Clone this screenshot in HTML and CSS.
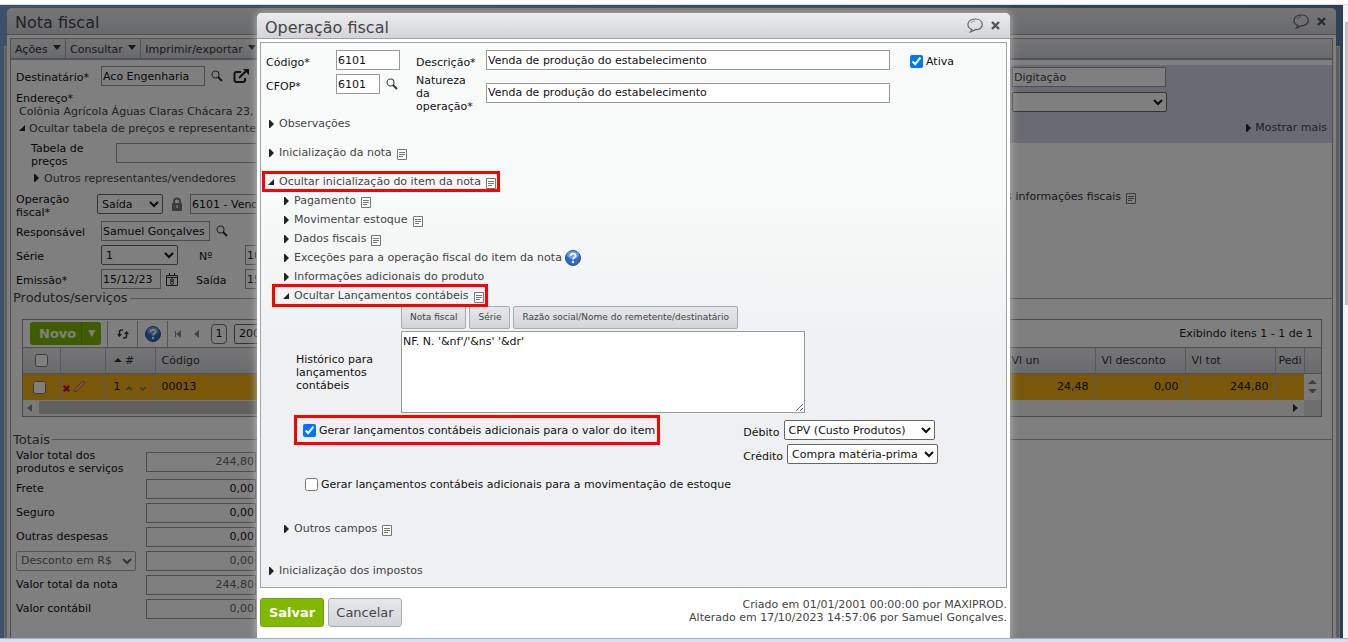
FILE: index.html
```html
<!DOCTYPE html>
<html lang="pt-BR">
<head>
	<meta charset="utf-8">
	<title>Nota fiscal</title>
	<link rel="stylesheet" href="styles.css">
</head>
<body>
<svg class="defs" width="0" height="0">
	<symbol id="i-right" viewBox="0 0 6 10"><path d="M1 1h1l4 4-4 4H1z" fill="#222"/></symbol>
	<symbol id="i-open" viewBox="0 0 6 10"><path d="M6 2v6H0z" fill="#222"/></symbol>
	<symbol id="i-note" viewBox="0 0 10 11"><path d="M.5.5h9v10h-9z" fill="#fff" stroke="#777"/><path d="M2 3.500h6M2 5.500h6M2 7.500h4" stroke="#777"/></symbol>
	<symbol id="i-search" viewBox="0 0 12 12"><circle cx="4.500" cy="4.500" r="3.500" fill="none" stroke="#444" stroke-width="1.100"/><path d="M7 7l4 4" stroke="#333" stroke-width="1.900"/></symbol>
	<symbol id="i-chat" viewBox="0 0 17 15"><path d="M5 11.500C-1.500 9 0 1 8.500 1s9.500 10.500 0 10.700L3.500 14z" fill="none" stroke="#666" stroke-width="1.200"/><path d="M4 5c1-1.500 2-2 4-2" fill="none" stroke="#888"/></symbol>
	<symbol id="i-close" viewBox="0 0 9 9"><path d="M1 1l7 7M8 1L1 8" stroke="#555" stroke-width="2.400"/></symbol>
	<symbol id="i-ext" viewBox="0 0 16 14"><path d="M8 3H3.500Q1.500 3 1.500 5v6q0 2 2 2H10q2 0 2-2V9" fill="none" stroke="#222" stroke-width="2"/><path d="M6 9l7-7" stroke="#222" stroke-width="2"/><path d="M10 0h6v6z" fill="#222"/></symbol>
	<symbol id="i-lock" viewBox="0 0 12 14"><path d="M3 7V4.500a3 3 0 0 1 6 0V7" fill="none" stroke="#777" stroke-width="2"/><rect x="1" y="6" width="10" height="8" rx="1" fill="#777"/><path d="M6 8v3" stroke="#ccc" stroke-width="2"/></symbol>
	<symbol id="i-cal" viewBox="0 0 12 13"><path d="M.5 2.500h11v10H.5zM1 4.500h10M3.500 0v3M8.500 0v3" fill="none" stroke="#333"/><ellipse cx="6" cy="7" rx="1.500" ry="1.200" fill="none" stroke="#333"/><ellipse cx="6" cy="9.800" rx="1.700" ry="1.400" fill="none" stroke="#333"/></symbol>
	<symbol id="i-help" viewBox="0 0 16 16"><circle cx="8" cy="8" r="7.500" fill="#2f69c4" stroke="#2351a0"/><ellipse cx="8" cy="5" rx="6" ry="4" fill="#6d9be2"/><path d="M5.500 6.200C5.500 2.500 11 3 10.600 6 10.400 7.500 8 7.800 8 9.500" fill="none" stroke="#fff" stroke-width="1.800"/><circle cx="8" cy="12" r="1.200" fill="#fff"/></symbol>
	<symbol id="i-sync" viewBox="0 0 14 12"><path d="M7 2H5.500Q3.500 2 3.500 4v4M7 10h1.500q2 0 2-2V4" fill="none" stroke="#333" stroke-width="1.500"/><path d="M1 6h5L3.500 9zM8 6h5L10.500 3z" fill="#333"/></symbol>
	<symbol id="i-pencil" viewBox="0 0 13 13"><path d="M1 12l1-3.500L10 1l2 2-8 8z" fill="#f3b37a" stroke="#b56a35"/></symbol>
</svg>

<div class="edge-top"></div>
<div class="view">
<div class="screen">
	<div class="back-window"></div>

	<section class="window nota">
		<header class="title-bar">
			<h1>Nota fiscal</h1>
			<button class="ico" aria-label="Comentar"><svg width="17" height="15"><use href="#i-chat"/></svg></button>
			<button class="ico" aria-label="Fechar"><svg width="9" height="9"><use href="#i-close"/></svg></button>
		</header>
		<div class="nota-body">
			<nav class="menu">
				<button>Ações <i class="down"></i></button>
				<button>Consultar <i class="down"></i></button>
				<button>Imprimir/exportar <i class="down"></i></button>
			</nav>
			<div class="top">
				<div class="left">
					<div class="row r-dest">
						<label for="dest">Destinatário*</label>
						<input id="dest" class="w104" value="Aco Engenharia">
						<svg class="gap6" width="12" height="12"><use href="#i-search"/></svg>
						<svg class="gap10" width="16" height="14"><use href="#i-ext"/></svg>
					</div>
					<div class="addr"><span>Endereço*</span><p>Colônia Agrícola Águas Claras Chácara 23, Lote</p></div>
					<a class="fold" href="#"><svg width="6" height="10"><use href="#i-open"/></svg>Ocultar tabela de preços e representante/vendedor</a>
					<div class="row r-tab">
						<label for="tab">Tabela de preços</label>
						<input id="tab" class="w154">
					</div>
					<a class="fold inner" href="#"><svg width="6" height="10"><use href="#i-right"/></svg>Outros representantes/vendedores</a>
					<div class="row r-op">
						<label for="op">Operação fiscal*</label>
						<select id="op" class="w66"><option>Saída</option></select>
						<svg class="gap8" width="12" height="14"><use href="#i-lock"/></svg>
						<input class="w77 gap7" aria-label="Operação" value="6101 - Venda">
					</div>
					<div class="row">
						<label for="resp">Responsável</label>
						<input id="resp" class="w109" value="Samuel Gonçalves">
						<svg class="gap6" width="12" height="12"><use href="#i-search"/></svg>
					</div>
					<div class="row">
						<label for="serie">Série</label>
						<select id="serie" class="w77"><option>1</option></select>
						<label class="second" for="num">Nº</label>
						<input id="num" class="w60" value="10256">
					</div>
					<div class="row">
						<label for="emi">Emissão*</label>
						<input id="emi" class="w60" value="15/12/23">
						<svg class="gap5" width="12" height="13"><use href="#i-cal"/></svg>
						<label class="second near" for="sai">Saída</label>
						<input id="sai" class="w60" value="15/12/23">
					</div>
				</div>
				<div class="right">
					<div class="status">
						<input class="w154" aria-label="Situação" value="Digitação">
						<select class="w155" aria-label="Etapa"><option></option></select>
						<a class="more" href="#"><svg width="6" height="10"><use href="#i-right"/></svg>Mostrar mais</a>
					</div>
					<p class="extra">Mais informações fiscais <svg width="10" height="11"><use href="#i-note"/></svg></p>
				</div>
			</div>

			<h2>Produtos/serviços</h2>
			<div class="grid">
				<div class="tools">
					<button class="novo">Novo<span>▼</span></button>
					<button class="tool" aria-label="Atualizar"><svg width="14" height="12"><use href="#i-sync"/></svg></button>
					<button class="tool" aria-label="Ajuda"><svg width="16" height="16"><use href="#i-help"/></svg></button>
					<i class="sep"></i><i class="first"></i><i class="prev"></i>
					<span class="page">1</span>
					<select class="w60" aria-label="Itens por página"><option>200</option></select>
					<span class="count">Exibindo itens 1 - 1 de 1</span>
				</div>
				<table>
					<colgroup><col class="c-chk"><col class="c-act"><col class="c-num"><col class="c-cod"><col><col class="c-val"><col class="c-val"><col class="c-val"><col class="c-ped"><col class="c-bar"></colgroup>
					<tr>
						<th><input type="checkbox" aria-label="Selecionar todos"></th><th></th><th><i class="up"></i> #</th><th>Código</th><th></th><th>Vl un</th><th>Vl desconto</th><th>Vl tot</th><th>Pedi</th><th></th>
					</tr>
					<tr>
						<td><input type="checkbox" aria-label="Selecionar item 1"></td>
						<td><svg class="del" width="7" height="7" viewBox="0 0 9 9"><path d="M1 1l7 7M8 1L1 8" stroke="#c01818" stroke-width="3"/></svg> <svg width="13" height="13"><use href="#i-pencil"/></svg></td>
						<td>1 <svg width="24" height="8"><path d="M2 6l3-3 3 3M16 3l3 3 3-3" fill="none" stroke="#776" stroke-width="1.500"/></svg></td>
						<td>00013</td><td></td><td class="num">24,48</td><td class="num">0,00</td><td class="num">244,80</td><td></td>
						<td class="bar"><i class="up"></i><i class="down small"></i></td>
					</tr>
				</table>
				<div class="scroll"><i class="prev"></i><span></span><i class="next"></i><b></b></div>
			</div>

			<h2 class="totais">Totais</h2>
			<div class="sum">
				<label for="t1">Valor total dos produtos e serviços</label><input id="t1" value="244,80" disabled>
				<label for="t2">Frete</label><input id="t2" value="0,00">
				<label for="t3">Seguro</label><input id="t3" value="0,00">
				<label for="t4">Outras despesas</label><input id="t4" value="0,00">
				<select aria-label="Tipo de desconto" disabled><option>Desconto em R$</option></select><input aria-label="Desconto" value="0,00" disabled>
				<label for="t6">Valor total da nota</label><input id="t6" value="244,80" disabled>
				<label for="t7">Valor contábil</label><input id="t7" value="0,00" disabled>
			</div>
		</div>
	</section>

	<div class="shade"></div>

	<section class="window dialog" role="dialog" aria-label="Operação fiscal">
		<header class="title-bar">
			<h1>Operação fiscal</h1>
			<button class="ico" aria-label="Comentar"><svg width="17" height="15"><use href="#i-chat"/></svg></button>
			<button class="ico" aria-label="Fechar"><svg width="9" height="9"><use href="#i-close"/></svg></button>
		</header>
		<div class="dialog-body">
			<div class="form">
				<div class="codes">
					<label for="cod">Código*</label><input id="cod" class="w64" value="6101">
					<label for="cfop">CFOP*</label><div><input id="cfop" class="w44" value="6101"><svg class="gap6" width="12" height="12"><use href="#i-search"/></svg></div>
				</div>
				<div class="names">
					<label for="desc">Descrição*</label><input id="desc" value="Venda de produção do estabelecimento">
					<label for="nat">Natureza da operação*</label><input id="nat" value="Venda de produção do estabelecimento">
				</div>
				<label class="ativa"><input type="checkbox" checked>Ativa</label>
			</div>

			<a class="item" href="#"><svg width="6" height="10"><use href="#i-right"/></svg>Observações</a>
			<a class="item" href="#"><svg width="6" height="10"><use href="#i-right"/></svg>Inicialização da nota<svg class="note" width="10" height="11"><use href="#i-note"/></svg></a>
			<a class="item mark" href="#"><svg width="6" height="10"><use href="#i-open"/></svg>Ocultar inicialização do item da nota<svg class="note" width="10" height="11"><use href="#i-note"/></svg></a>
			<div class="subs">
				<a class="item" href="#"><svg width="6" height="10"><use href="#i-right"/></svg>Pagamento<svg class="note" width="10" height="11"><use href="#i-note"/></svg></a>
				<a class="item" href="#"><svg width="6" height="10"><use href="#i-right"/></svg>Movimentar estoque<svg class="note" width="10" height="11"><use href="#i-note"/></svg></a>
				<a class="item" href="#"><svg width="6" height="10"><use href="#i-right"/></svg>Dados fiscais<svg class="note" width="10" height="11"><use href="#i-note"/></svg></a>
				<a class="item" href="#"><svg width="6" height="10"><use href="#i-right"/></svg>Exceções para a operação fiscal do item da nota<svg class="q" width="16" height="16"><use href="#i-help"/></svg></a>
				<a class="item" href="#"><svg width="6" height="10"><use href="#i-right"/></svg>Informações adicionais do produto</a>
				<a class="item mark" href="#"><svg width="6" height="10"><use href="#i-open"/></svg>Ocultar Lançamentos contábeis<svg class="note" width="10" height="11"><use href="#i-note"/></svg></a>
			</div>

			<div class="hist">
				<label for="hist">Histórico para lançamentos contábeis</label>
				<div>
					<div class="tags"><button>Nota fiscal</button><button>Série</button><button>Razão social/Nome do remetente/destinatário</button></div>
					<textarea id="hist">NF. N. '&amp;nf'/'&amp;ns' '&amp;dr'</textarea>
				</div>
			</div>
			<div class="gerar">
				<label class="chk boxed"><input type="checkbox" checked>Gerar lançamentos contábeis adicionais para o valor do item</label>
				<div class="contas">
					<div><label for="deb">Débito</label><select id="deb"><option>CPV (Custo Produtos)</option></select></div>
					<div><label for="cred">Crédito</label><select id="cred"><option>Compra matéria-prima</option></select></div>
				</div>
			</div>
			<label class="chk estoque"><input type="checkbox">Gerar lançamentos contábeis adicionais para a movimentação de estoque</label>
			<div class="subs outros">
				<a class="item" href="#"><svg width="6" height="10"><use href="#i-right"/></svg>Outros campos<svg class="note" width="10" height="11"><use href="#i-note"/></svg></a>
			</div>
			<a class="item" href="#"><svg width="6" height="10"><use href="#i-right"/></svg>Inicialização dos impostos</a>
		</div>
		<footer>
			<button class="salvar">Salvar</button>
			<button class="cancelar">Cancelar</button>
			<p>Criado em 01/01/2001 00:00:00 por MAXIPROD.<br>Alterado em 17/10/2023 14:57:06 por Samuel Gonçalves.</p>
		</footer>
	</section>
</div>
<div class="page-scroll"><span></span></div>
</div>
<div class="edge-bottom"></div>
</body>
</html>
```

FILE: styles.css
```css
*{box-sizing:border-box;}
body,h1,h2,p{margin:0;}
body{height:100vh;display:flex;flex-direction:column;overflow:hidden;background:#fff;color:#111;font:11px/13px "DejaVu Sans",sans-serif;}
input,select,textarea,button{font:inherit;color:inherit;margin:0;}
input,textarea{height:20px;padding:0 1px;border:1px solid #999;background:#fff;}
input[type=checkbox]{width:13px;height:13px;padding:0;flex:none;}
select{height:20px;padding:0;border:1px solid #666;border-radius:2px;background-color:#fff;}
button{padding:0;border:0;background:none;}
a{color:#444;text-decoration:none;}
svg{flex:none;}
.defs{position:absolute;}

.edge-top{height:5px;flex:none;border-bottom:1px solid #ddd;}
.edge-bottom{height:4px;flex:none;background:#d7deef;border-top:1px solid #a9b0bd;}
.view{flex:1;min-height:0;display:flex;}
.screen{flex:1;min-width:0;position:relative;overflow:hidden;background:linear-gradient(90deg,#7ba2d2,#5d81ab);}
.page-scroll{width:5px;padding:17px 0 0 2px;background:#f4f4f4;}
.page-scroll span{display:block;height:46%;background:#c1c1c1;}
.back-window{position:absolute;top:41px;left:4px;right:3px;bottom:0;background:#bbb;border:1px solid #ddd;}
.shade{position:absolute;top:0;left:0;right:0;bottom:0;background:rgba(0,0,0,.5);}

/* windows */
.window{background:#fff;border-radius:5px 5px 0 0;}
.title-bar{display:flex;align-items:center;gap:7px;height:26px;padding:0 10px 0 8px;border-bottom:1px solid #9ea3ab;border-radius:5px 5px 0 0;background:linear-gradient(#ececee,#d2d4d8);}
.title-bar h1{flex:1;padding-top:4px;font-size:16px;line-height:22px;font-weight:400;color:#444;}
.ico{display:flex;}
.nota{position:relative;margin:3px 7px 0;height:700px;padding:0 3px;}
.nota .title-bar{height:27px;margin:0 -3px 3px;}
.nota-body{height:100%;border:1px solid #9ea3ab;}

.menu{display:flex;height:21px;border-bottom:2px solid #9ea3ab;background:linear-gradient(#ececee,#d2d4d8);}
.menu button{padding:1px 4px 0;border-right:1px solid #9ea3ab;color:#333;white-space:nowrap;}
.down,.up,.prev,.next,.first{display:inline-block;border:4px solid transparent;}
.down{border-top:5px solid #333;border-bottom:0;vertical-align:3px;margin-left:2px;}
.up{border-bottom:4px solid #333;border-top:0;vertical-align:2px;}
.prev,.first{border-right:5px solid #888;border-left:0;}
.first{box-shadow:-2px 0 0 -1px #888;}
.next{border-left:5px solid #333;border-right:0;}

.top{display:flex;justify-content:space-between;height:229px;}
.left{width:245px;padding:6px 0 0 5px;white-space:nowrap;overflow:hidden;}
.row{display:flex;align-items:center;height:20px;margin-bottom:4px;}
.row input,.row select{flex:none;}
.row label{flex:none;width:85px;padding-top:3px;}
.row .second{width:46px;margin-left:21px;}
.row .near{width:49px;margin-left:18px;}
.addr{padding-top:3px;}
.addr p{padding-left:3px;color:#444;}
.fold{display:flex;align-items:center;height:20px;padding-left:3px;gap:4px;}
.inner{padding-left:17px;gap:5px;height:22px;}
.r-tab,.r-op{white-space:normal;}
.r-dest{margin-bottom:3px;}
.r-tab{padding-left:15px;margin-top:5px;}
.r-op{margin:5px 0 7px;}
.r-op label{width:81px;padding-right:25px;}
.gap5{margin-left:5px;}
.gap6{margin-left:6px;}
.gap7{margin-left:7px;}
.gap8{margin-left:8px;}
.gap10{margin-left:10px;}
.w44{width:44px;}
.w60{width:60px;}
.w64{width:64px;}
.w66{width:66px;}
.w77{width:77px;}
.w104{width:104px;}
.w109{width:109px;}
.w154{width:154px;}
.w155{width:155px;}

.right{width:400px;padding-top:5px;}
.status{display:flex;flex-direction:column;align-items:flex-start;gap:5px;height:78px;padding:2px 5px 0 80px;background:#d5d5e4;}
.status input{color:#444;}
.more{display:flex;align-items:center;gap:4px;margin:4px 0 0 auto;}
.extra{padding:47px 0 0 55px;color:#333;}
.extra svg{vertical-align:-4px;margin-left:2px;}

h2{display:flex;align-items:center;gap:2px;height:18px;padding-left:2px;font-size:13px;line-height:18px;font-weight:400;color:#444;}
h2:after{content:"";flex:1;border-top:1px solid #aaa;}
.grid{margin:12px 10px 0 11px;border:1px solid #8e939b;}
.tools{display:flex;align-items:center;height:27px;padding:0 8px 0 7px;}
.novo{display:flex;align-items:center;height:23px;width:71px;border-radius:3px;background:#80b900;color:#fff;font-size:13px;font-weight:700;padding-left:9px;margin-right:6px;}
.novo span{flex:1;margin-left:5px;border-left:1px solid #6da000;font-size:9px;line-height:23px;}
.tool{display:flex;align-items:center;justify-content:center;width:30px;height:26px;border-left:1px solid #aaa;}
.sep{height:26px;border-left:1px solid #aaa;}
.tools .first{margin-left:8px;}
.tools .prev{margin:0 12px 0 13px;}
.page{width:16px;height:20px;margin-right:7px;border:1px solid #777;border-radius:4px;line-height:18px;text-align:center;}
.count{margin-left:auto;color:#222;}
table{width:100%;table-layout:fixed;border-collapse:collapse;}
.c-chk{width:37px;}
.c-act{width:45px;}
.c-num{width:50px;}
.c-cod{width:150px;}
.c-val{width:90px;}
.c-ped{width:29px;}
.c-bar{width:17px;}
th,td{height:26px;padding:0 6px;border-left:1px solid #aeb3bd;text-align:left;font-weight:400;white-space:nowrap;overflow:hidden;}
th{border-top:1px solid #9ea3ab;border-bottom:1px solid #9ea3ab;background:linear-gradient(#ececee,#d2d4d8);color:#333;}
td{background:#f5b115;}
td:nth-child(2){padding:0 2px;}
td:nth-child(3),th:nth-child(3){padding:0 4px 0 8px;}
th:nth-child(9){padding:0 0 0 3px;}
th:first-child,td:first-child{border-left:0;padding:0 4px 0 0;text-align:center;}
th:first-child{padding:0;}
th input,td input{vertical-align:middle;}
td svg{vertical-align:-2px;}
td .del{vertical-align:-1px;}
td.num{text-align:right;}
td.bar{padding:0 4px;background:#f4f4f4;border:0;line-height:10px;}
td.bar i{display:block;margin:5px 0;opacity:.6;}
.small{border-width:4px 4px 0;}
.scroll{display:flex;align-items:center;height:16px;padding-left:4px;background:#f1f1f1;}
.scroll span{flex:0 1 900px;height:13px;margin-left:7px;background:#c1c1c1;}
.scroll .next{margin:0 6px 0 auto;}
.scroll b{width:17px;height:16px;background:#dcdcdc;}
.totais{margin-top:14px;}
.sum{display:grid;grid-template-columns:120px 110px;column-gap:10px;row-gap:4px;align-items:center;padding:0 0 0 5px;}
.sum input{text-align:right;}
.sum input:disabled,.sum select:disabled{color:#666;}
.sum select:disabled{border-color:#aaa;opacity:1;}

/* fiscal operation dialog */
.dialog{position:absolute;top:8px;left:257px;right:333px;bottom:0;padding:0 3px;box-shadow:0 0 8px #bbb;}
.dialog .title-bar{margin:0 -3px 3px;}
.dialog-body{height:546px;padding:7px 2px 0;border:1px solid #9ea3ab;background:linear-gradient(#f9fbfa,#f8faf9 30%,#eff0f2 55%);}
.form{display:flex;height:64px;padding-left:3px;}
.codes{display:grid;grid-template-columns:70px 80px;row-gap:4px;align-content:start;align-items:center;}
.codes label,.names label:first-child{padding-top:4px;}
.codes div{display:flex;align-items:center;}
.names{flex:0 1 474px;display:grid;grid-template-columns:70px 1fr;row-gap:4px;align-content:start;align-items:center;}
.names label{padding-right:10px;}
#nat{margin-bottom:2px;}
.ativa{display:flex;align-items:center;gap:3px;height:22px;margin-left:20px;}
.item{display:flex;align-items:center;width:max-content;height:19px;margin-bottom:10px;padding:0 5px;color:#444;}
.item svg:first-child{margin-right:5px;}
.note{margin:4px 0 0 5px;}
.q{margin-left:3px;}
.item.mark{margin-bottom:0;padding-right:3px;outline:3px solid #f00;outline-offset:-2px;}
.subs{padding-left:11px;}
.subs .item{margin:0;padding-left:9px;}
.subs .mark{padding-right:2px;outline-offset:-1px;}
.hist{display:flex;align-items:center;padding:1px 0 0 33px;}
.hist>label{width:105px;padding:26px 20px 0 0;}
.tags{display:flex;gap:3px;margin-bottom:2px;}
.tags button{height:23px;padding:0 8px;border:1px solid #a5acb5;border-radius:2px;background:linear-gradient(#e6e7ea,#d3d5d9);font-size:9px;color:#444;}
textarea{display:block;width:404px;height:82px;padding:3px 1px;resize:both;}
.gerar{display:flex;align-items:flex-start;padding:2px 0 0 31px;}
.chk{display:flex;align-items:center;gap:3px;}
.boxed{flex:none;height:30px;padding:0 2px 0 6px;border:3px solid #f00;}
.contas{margin:5px 66px 0 auto;}
.contas div{display:flex;align-items:center;margin-bottom:4px;}
.contas label{padding:4px 4px 0 0;}
.contas select{width:151px;}
.estoque{height:20px;margin:6px 0 0 42px;}
.outros{margin:25px 0 23px;}
footer{display:flex;align-items:flex-start;padding-top:10px;}
footer button{height:29px;border:1px solid #a5acb5;border-radius:3px;font-size:13px;}
.salvar{width:64px;margin-right:4px;border-color:#72a500;background:#80b900;color:#fff;font-weight:700;}
.cancelar{width:74px;background:linear-gradient(#e6e7ea,#d3d5d9);color:#444;}
footer p{margin-left:auto;text-align:right;color:#444;}
```
